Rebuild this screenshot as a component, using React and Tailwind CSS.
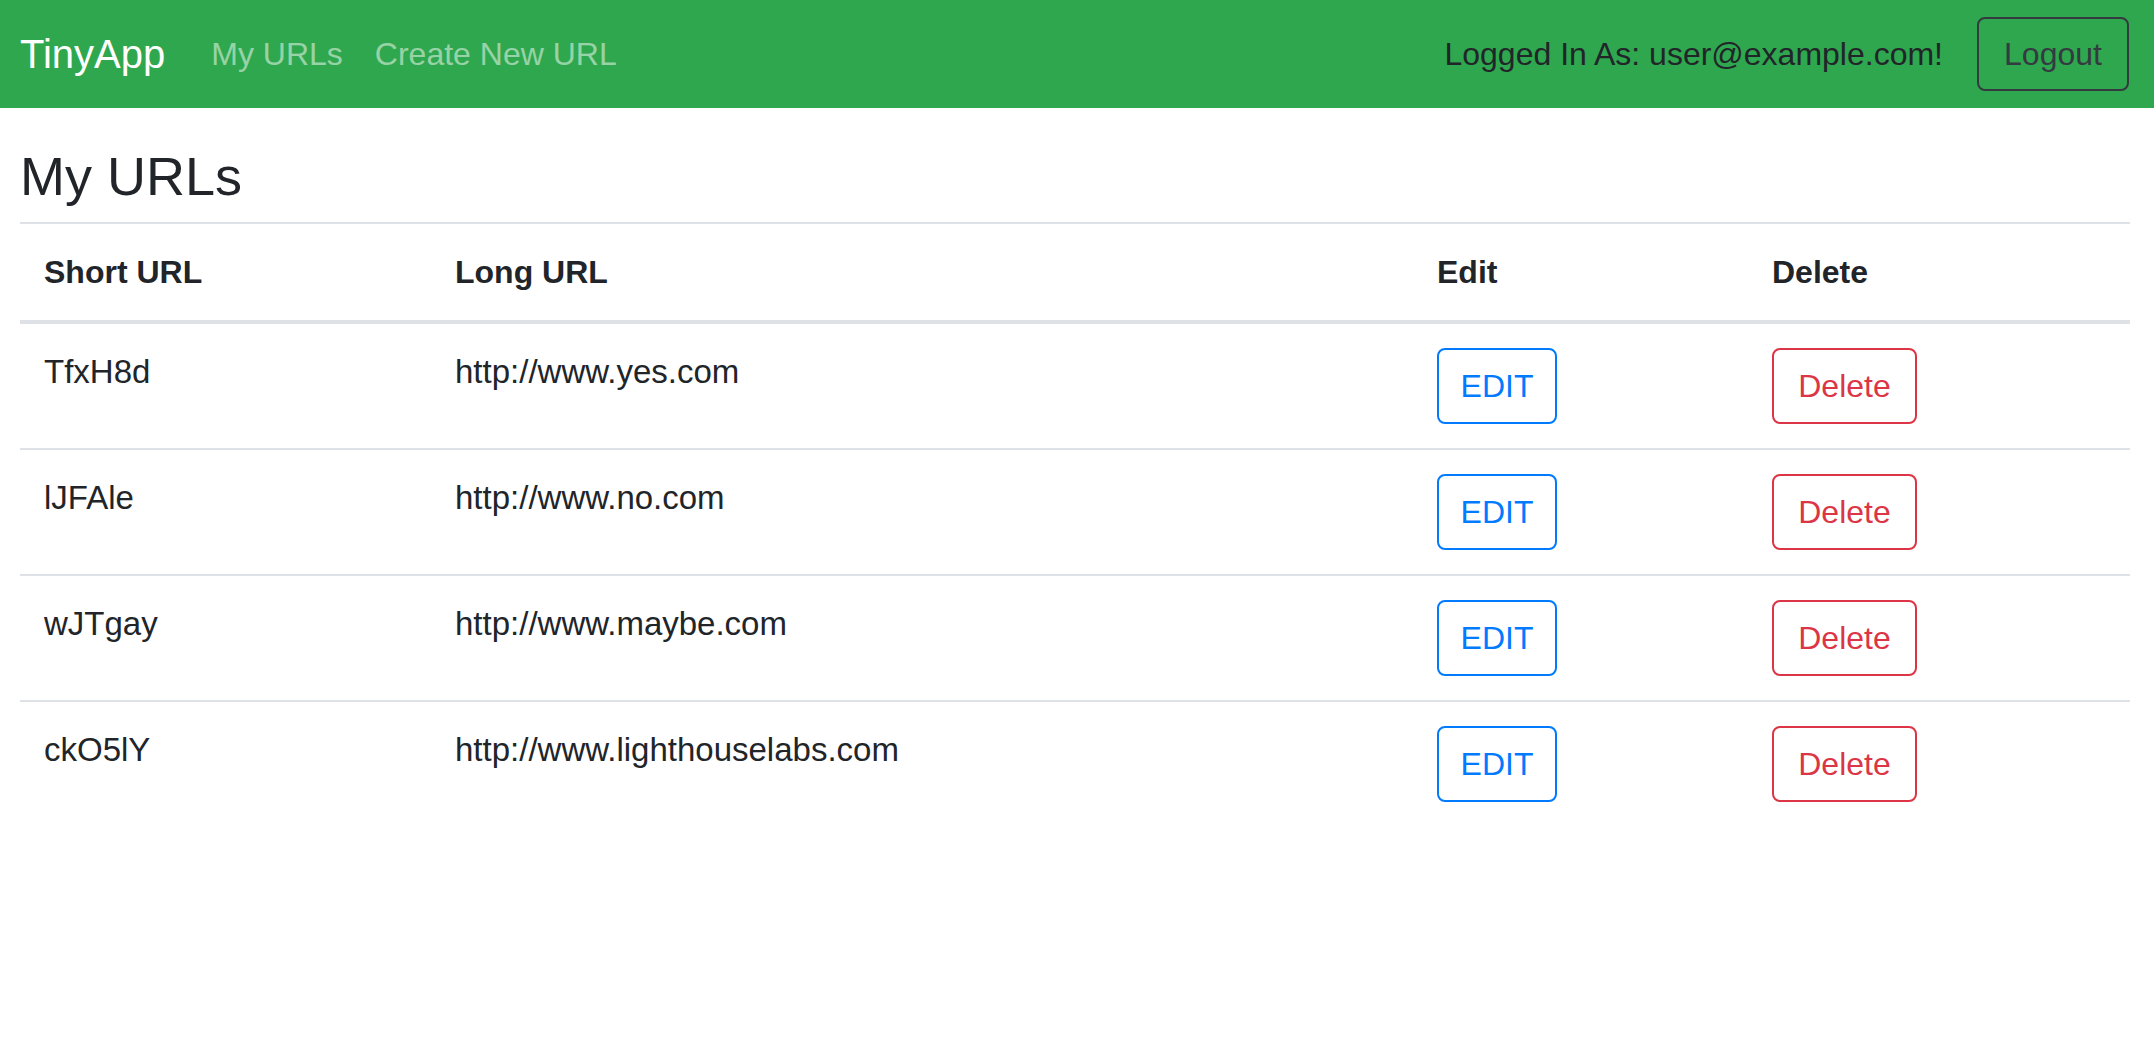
import React from 'react';

const urls = [
  { short: 'TfxH8d', long: 'http://www.yes.com' },
  { short: 'lJFAle', long: 'http://www.no.com' },
  { short: 'wJTgay', long: 'http://www.maybe.com' },
  { short: 'ckO5lY', long: 'http://www.lighthouselabs.com' },
];

// Top green navbar
function Navbar() {
  return (
    <nav className="h-[108px] bg-[#2fa74e] flex items-center pl-5 pr-[25px]">
      <span className="text-[40px] text-white mr-[30px]">TinyApp</span>
      <a className="px-4 text-[32px] text-white/50">My URLs</a>
      <a className="px-4 text-[32px] text-white/50">Create New URL</a>
      <div className="ml-auto flex items-center">
        <span className="text-[32px] text-[#212529] mr-[34px]">Logged In As: user@example.com!</span>
        <button className="h-[74px] w-[152px] border-2 border-[#343a40] rounded-lg text-[32px] text-[#343a40]">
          Logout
        </button>
      </div>
    </nav>
  );
}

export default function App() {
  return (
    <div className="min-h-screen bg-white font-['Liberation_Sans',Arial,sans-serif] text-[#212529]">
      <Navbar />

      <main className="pl-5 pr-6">
        <h1 className="mt-[35px] mb-[13px] text-[54px] leading-[66px]">My URLs</h1>

        <table className="w-full table-fixed border-collapse border-t-2 border-[#dee2e6]">
          <colgroup>
            <col className="w-[411px]" />
            <col className="w-[982px]" />
            <col className="w-[335px]" />
            <col />
          </colgroup>
          <thead>
            <tr className="border-b-4 border-[#dee2e6]">
              <th className="p-6 text-left text-[32px] leading-[48px] font-bold">Short URL</th>
              <th className="p-6 text-left text-[32px] leading-[48px] font-bold">Long URL</th>
              <th className="p-6 text-left text-[32px] leading-[48px] font-bold">Edit</th>
              <th className="p-6 text-left text-[32px] leading-[48px] font-bold">Delete</th>
            </tr>
          </thead>
          <tbody>
            {urls.map((u, i) => (
              <tr key={u.short} className={i > 0 ? 'border-t-2 border-[#dee2e6]' : ''}>
                <td className="p-6 align-top text-[33px] leading-[48px]">{u.short}</td>
                <td className="p-6 align-top text-[33px] leading-[48px]">{u.long}</td>
                <td className="p-6 align-top">
                  <button className="w-[120px] h-[76px] flex items-center justify-center border-2 border-[#007bff] rounded-lg text-[32px] text-[#007bff]">
                    EDIT
                  </button>
                </td>
                <td className="p-6 align-top">
                  <button className="w-[145px] h-[76px] flex items-center justify-center border-2 border-[#dc3545] rounded-lg text-[32px] text-[#dc3545]">
                    Delete
                  </button>
                </td>
              </tr>
            ))}
          </tbody>
        </table>
      </main>
    </div>
  );
}
